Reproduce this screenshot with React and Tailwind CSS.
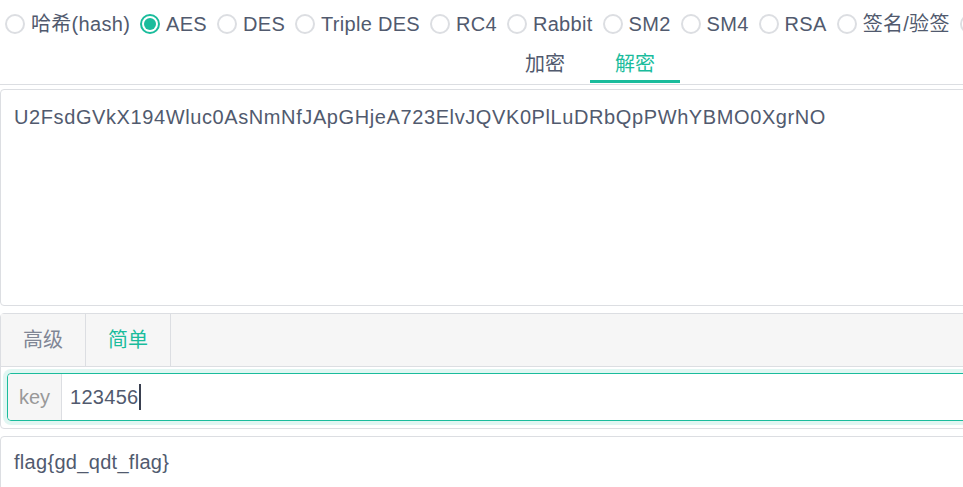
import { useState } from 'react';

const algos = ['哈希(hash)', 'AES', 'DES', 'Triple DES', 'RC4', 'Rabbit', 'SM2', 'SM4', 'RSA', '签名/验签', 'Base64'];

const Radio = ({ checked }) => (
  <span
    className={`flex h-5 w-5 shrink-0 items-center justify-center rounded-full border-2 bg-white ${
      checked ? 'border-[#1abc9c]' : 'border-[#dcdee2]'
    }`}
  >
    {checked && <span className="h-3 w-3 rounded-full bg-[#1abc9c]" />}
  </span>
);

const App = () => {
  const [algo, setAlgo] = useState('AES');
  const [mode, setMode] = useState('dec');
  const [level, setLevel] = useState('simple');

  return (
    <div
      className="h-screen w-screen overflow-hidden bg-white text-[20px] text-[#515a6e]"
      style={{ fontFamily: '"Liberation Sans", Arial, "Noto Sans CJK SC", sans-serif' }}
    >
      <div className="w-[1180px]">
        <div className="flex h-[47px] items-center whitespace-nowrap pl-[5px] tracking-[0.3px]">
          {algos.map(a => (
            <label
              key={a}
              onClick={() => setAlgo(a)}
              className="mr-[10px] flex cursor-pointer items-center gap-[6px] leading-none"
            >
              <Radio checked={algo === a} />
              <span>{a}</span>
            </label>
          ))}
        </div>

        <div className="flex h-[38px] justify-center border-b border-[#dcdee2]">
          {[
            ['enc', '加密'],
            ['dec', '解密'],
          ].map(([k, t]) => (
            <div
              key={k}
              onClick={() => setMode(k)}
              className={`relative w-[90px] cursor-pointer text-center leading-[34px] ${
                mode === k ? 'text-[#1abc9c]' : 'text-[#515a6e]'
              }`}
            >
              {t}
              {mode === k && <span className="absolute bottom-[1px] left-0 h-[3px] w-full bg-[#1abc9c]" />}
            </div>
          ))}
        </div>

        <div className="mt-[4px] h-[217px] rounded border border-[#dcdee2] px-[13px] pt-[12px] leading-[30px] tracking-[0.6px]">
          U2FsdGVkX194Wluc0AsNmNfJApGHjeA723ElvJQVK0PlLuDRbQpPWhYBMO0XgrNO
        </div>

        <div className="mt-[7px] rounded border border-[#dcdee2]">
          <div className="flex h-[53px] border-b border-[#dcdee2] bg-[#f6f6f6]">
            {[
              ['adv', '高级'],
              ['simple', '简单'],
            ].map(([k, t]) => (
              <div
                key={k}
                onClick={() => setLevel(k)}
                className={`flex w-[85px] cursor-pointer items-center justify-center border-r border-[#dcdee2] ${
                  level === k ? 'text-[#1abc9c]' : 'text-[#808695]'
                }`}
              >
                {t}
              </div>
            ))}
          </div>
          <div className="px-[6px] pb-[7px] pt-[6px]">
            <div className="flex h-[48px] rounded border border-[#1abc9c] shadow-[0_0_0_4px_rgba(26,188,156,0.13)]">
              <div className="flex w-[54px] items-center justify-center rounded-l border-r border-[#dcdee2] bg-[#f6f6f6] text-[#999]">
                key
              </div>
              <div className="flex items-center pl-[8px] tracking-[0.3px]">
                123456
                <span className="h-[26px] w-[2px] bg-[#3a4050]" />
              </div>
            </div>
          </div>
        </div>

        <div className="mt-[7px] h-[90px] rounded border border-[#dcdee2] px-[13px] pt-[10px] leading-[30px] tracking-[0.3px]">
          flag{'{'}gd_qdt_flag{'}'}
        </div>
      </div>
    </div>
  );
};

export default App;
